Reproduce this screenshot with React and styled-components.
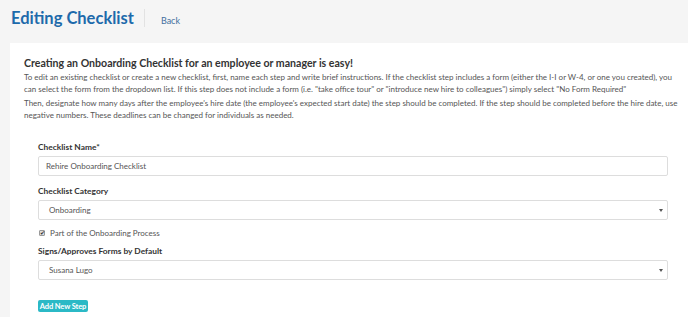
import React from "react"
import styled, { createGlobalStyle } from "styled-components"

const GlobalStyle = createGlobalStyle`
  html, body {
    margin: 0;
    padding: 0;
    background: #f5f5f5;
    font-family: Lato, "Open Sans", sans-serif;
    overflow: hidden;
  }
  * { box-sizing: border-box; }
`

const Page = styled.div`
  width: 688px;
  height: 317px;
  overflow: hidden;
`

const Header = styled.div`
  display: flex;
  align-items: center;
  height: 43px;
  padding-left: 11px;
`

const Title = styled.h1`
  margin: -8px 0 0;
  font-size: 16.5px;
  font-weight: 700;
  color: #1d6aab;
  padding-right: 10px;
  border-right: 1px solid #e2e2e2;
  line-height: 18px;
`

const BackLink = styled.a`
  margin-left: 16px;
  margin-top: -3px;
  font-size: 9px;
  color: #3f6f9e;
  text-decoration: none;
`

const Card = styled.div`
  background: #fff;
  margin-left: 10px;
  padding: 13px 4px 0 14px;
  min-height: 274px;
`

const Intro = styled.h2`
  margin: 0 0 1px;
  font-size: 10.6px;
  line-height: 14px;
  font-weight: 700;
  color: #333;
`

const Text = styled.p`
  margin: 0 0 2px;
  font-size: 8px;
  line-height: 12px;
  color: #555;
`

const Form = styled.div`
  padding: 19px 16px 0 14px;
  display: flex;
  flex-direction: column;
`

const Label = styled.label`
  font-size: 8.4px;
  line-height: 10px;
  font-weight: 700;
  color: #333;
  margin-bottom: 4px;
`

const Field = styled.div`
  display: flex;
  align-items: center;
  justify-content: space-between;
  height: 20px;
  border: 1px solid #ddd;
  border-radius: 2px;
  padding: 0 4px 0 ${(p) => (p.$select ? 10 : 7)}px;
  font-size: 8px;
  color: #555;
  margin-bottom: 10px;
`

const Caret = styled.span`
  width: 0;
  height: 0;
  border-left: 2.5px solid transparent;
  border-right: 2.5px solid transparent;
  border-top: 3px solid #555;
`

const CheckRow = styled.div`
  display: flex;
  align-items: center;
  gap: 5px;
  height: 10px;
  font-size: 8px;
  color: #555;
  margin: -2px 0 8px 1px;
`

const Box = styled.span`
  width: 6px;
  height: 6px;
  border: 1px solid #999;
  border-radius: 1px;
  background: #ddd;
  display: flex;
  align-items: center;
  justify-content: center;
  font-size: 6px;
  line-height: 1;
  color: #333;
`

const Button = styled.button`
  align-self: flex-start;
  margin-top: 10px;
  background: #2bb9c6;
  color: #fff;
  border: none;
  border-radius: 2px;
  font-family: Lato, sans-serif;
  font-size: 7.5px;
  font-weight: 700;
  height: 12px;
  width: 50px;
  padding: 0;
  letter-spacing: -0.1px;
`

export default function App() {
  return (
    <Page>
      <GlobalStyle />
      <Header>
        <Title>Editing Checklist</Title>
        <BackLink>Back</BackLink>
      </Header>
      <Card>
        <Intro>Creating an Onboarding Checklist for an employee or manager is easy!</Intro>
        <Text>
          To edit an existing checklist or create a new checklist, first, name each step and write brief instructions. If the checklist step includes a form (either the I-I or W-4, or one you created), you can select the form from the dropdown list. If this step does not include a form (i.e. "take office tour" or "introduce new hire to colleagues") simply select "No Form Required"
        </Text>
        <Text>
          Then, designate how many days after the employee's hire date (the employee's expected start date) the step should be completed. If the step should be completed before the hire date, use negative numbers. These deadlines can be changed for individuals as needed.
        </Text>
        <Form>
          <Label>Checklist Name*</Label>
          <Field>Rehire Onboarding Checklist</Field>
          <Label>Checklist Category</Label>
          <Field $select>
            Onboarding
            <Caret />
          </Field>
          <CheckRow>
            <Box>✔</Box>
            Part of the Onboarding Process
          </CheckRow>
          <Label>Signs/Approves Forms by Default</Label>
          <Field $select>
            Susana Lugo
            <Caret />
          </Field>
          <Button>Add New Step</Button>
        </Form>
      </Card>
    </Page>
  )
}
